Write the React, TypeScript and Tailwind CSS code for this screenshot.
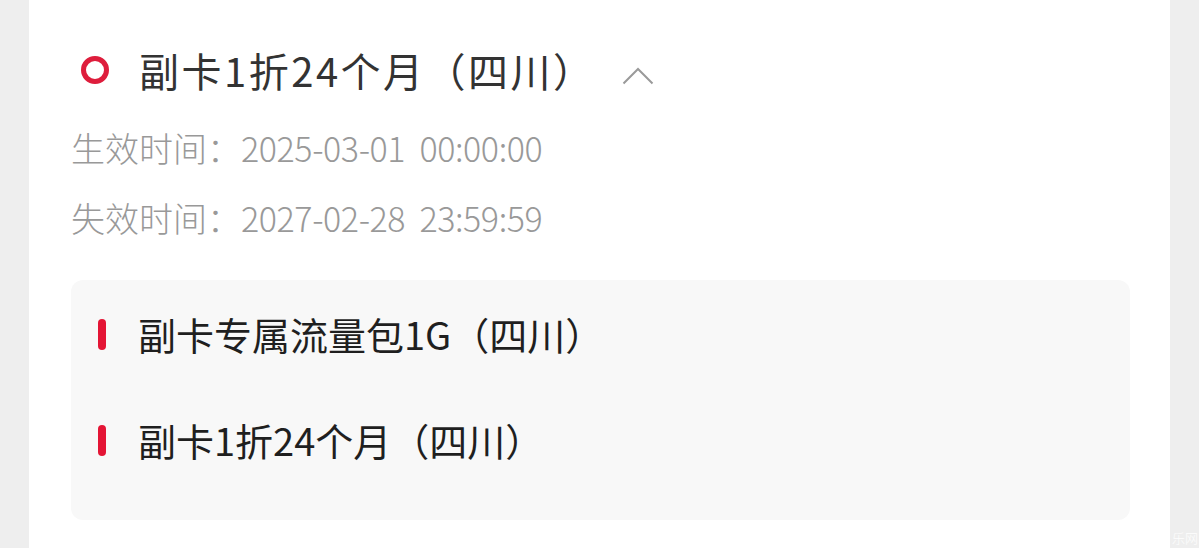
export default function App() {
  const font = { fontFamily: '"Noto Sans CJK SC", "Noto Sans", sans-serif' };
  return (
    <div className="relative flex h-[548px] w-full justify-center overflow-hidden bg-[#eeeeee] px-[29px]" style={font}>
      <div className="flex flex-1 flex-col bg-white pl-[42px] pr-[40px] pt-[44px]">
        <div className="flex h-[52px] items-center">
          <span className="ml-[10px] h-[28px] w-[28px] rounded-full border-[5px] border-[#de1d3c]" />
          <span className="ml-[30px] text-[40px] leading-[52px] tracking-[2.5px] text-[#333333]">副卡1折24个月（四川）</span>
          <svg className="ml-[26px] mt-[12px]" width="32" height="18" viewBox="0 0 32 18" fill="none">
            <path d="M1.5 16.5 L16 2 L30.5 16.5" stroke="#9a9a9a" strokeWidth="2" />
          </svg>
        </div>
        <div className="mt-[34px] flex flex-col gap-[34px] text-[34px] font-light leading-[36px] tracking-[-0.4px] text-[#999999]">
          <div>
            <span className="tracking-normal">生效时间：</span>2025-03-01&nbsp; 00:00:00
          </div>
          <div>
            <span className="tracking-normal">失效时间：</span>2027-02-28&nbsp; 23:59:59
          </div>
        </div>
        <div className="mt-[44px] flex h-[240px] flex-col gap-[56px] rounded-[12px] bg-[#f8f8f8] pl-[27px] pt-[29px]">
          <div className="flex h-[50px] items-center">
            <span className="h-[31px] w-[8px] rounded-full bg-[#e41535]" />
            <span className="ml-[32px] text-[38px] leading-[50px] text-[#1f1f1f]">副卡专属流量包1G（四川）</span>
          </div>
          <div className="flex h-[50px] items-center">
            <span className="h-[31px] w-[8px] rounded-full bg-[#e41535]" />
            <span className="ml-[32px] text-[38px] leading-[50px] text-[#1f1f1f]">副卡1折24个月（四川）</span>
          </div>
        </div>
      </div>
      <span className="absolute bottom-[2px] right-[1px] text-[13px] leading-[16px] font-light text-white/90">乐网</span>
    </div>
  );
}
